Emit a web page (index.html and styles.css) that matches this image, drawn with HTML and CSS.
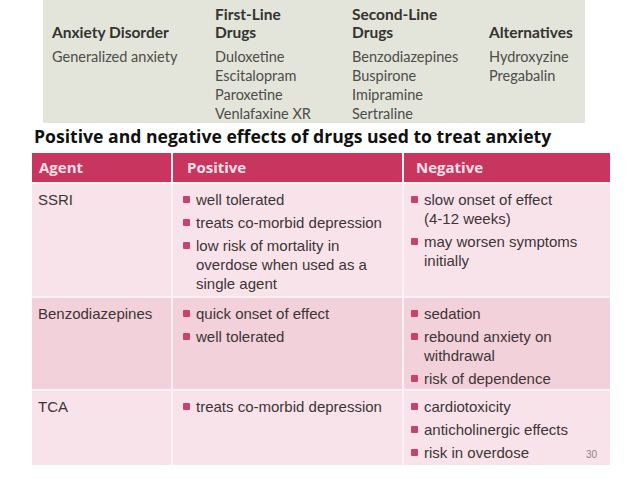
FILE: index.html
```html
<!DOCTYPE html>
<html>
<head>
<meta charset="utf-8">
<link rel="stylesheet" href="styles.css">
</head>
<body>
<div class="panel">
  <div class="ph">Anxiety Disorder</div>
  <div class="ph">First-Line<br>Drugs</div>
  <div class="ph">Second-Line<br>Drugs</div>
  <div class="ph">Alternatives</div>
  <div class="pc">Generalized anxiety</div>
  <div class="pc">Duloxetine<br>Escitalopram<br>Paroxetine<br>Venlafaxine XR</div>
  <div class="pc">Benzodiazepines<br>Buspirone<br>Imipramine<br>Sertraline</div>
  <div class="pc">Hydroxyzine<br>Pregabalin</div>
</div>
<h1 class="title">Positive and negative effects of drugs used to treat anxiety</h1>
<div class="table">
  <div class="th">Agent</div>
  <div class="th">Positive</div>
  <div class="th">Negative</div>

  <div class="td">SSRI</div>
  <div class="td"><ul class="bl">
    <li>well tolerated</li>
    <li>treats co-morbid depression</li>
    <li>low risk of mortality in overdose when used as a single agent</li>
  </ul></div>
  <div class="td neg"><ul class="bl">
    <li>slow onset of effect<br>(4-12 weeks)</li>
    <li>may worsen symptoms initially</li>
  </ul></div>

  <div class="td alt">Benzodiazepines</div>
  <div class="td alt"><ul class="bl">
    <li>quick onset of effect</li>
    <li>well tolerated</li>
  </ul></div>
  <div class="td alt neg"><ul class="bl">
    <li>sedation</li>
    <li>rebound anxiety on withdrawal</li>
    <li>risk of dependence</li>
  </ul></div>

  <div class="td">TCA</div>
  <div class="td"><ul class="bl">
    <li>treats co-morbid depression</li>
  </ul></div>
  <div class="td neg"><ul class="bl">
    <li>cardiotoxicity</li>
    <li>anticholinergic effects</li>
    <li>risk in overdose</li>
  </ul></div>
  <span class="pnum">30</span>
</div>
</body>
</html>
```
FILE: styles.css
```css
html, body {
  margin: 0;
  padding: 0;
  background: #ffffff;
}
body {
  width: 638px;
  height: 479px;
  overflow: hidden;
}
.panel {
  margin-left: 43px;
  width: 542px;
  height: 123px;
  box-sizing: border-box;
  background: #e3e4da;
  padding: 5px 0 0 9px;
  display: grid;
  grid-template-columns: 163px 137px 137px 1fr;
  grid-template-rows: auto auto;
  row-gap: 6px;
  font-family: "Lato", "Open Sans", sans-serif;
  color: #4d4d4a;
}
.ph {
  align-self: end;
  font-weight: 700;
  font-size: 15.5px;
  line-height: 18px;
  color: #333330;
}
.pc {
  font-size: 14.5px;
  line-height: 19px;
}
.title {
  margin: 1px 0 0 34px;
  height: 29px;
  font-family: "Open Sans", sans-serif;
  font-weight: 700;
  font-size: 17.6px;
  line-height: 25px;
  color: #111;
  white-space: nowrap;
}
.table {
  position: relative;
  margin-left: 32px;
  width: 578px;
  display: grid;
  grid-template-columns: 139px 229px 1fr;
  grid-template-rows: 29px 112px 91px 74px;
  gap: 2px;
  background: #fcf1f4;
  font-family: "Liberation Sans", Arial, sans-serif;
  font-size: 15px;
  color: #3c3537;
}
.th {
  background: #c8365f;
  color: #fbe0e8;
  font-family: "Open Sans", sans-serif;
  font-weight: 700;
  font-size: 15px;
  line-height: 29px;
  padding-left: 7px;
}
.th:nth-child(2) { padding-left: 14px; }
.th:nth-child(3) { padding-left: 12px; }
.td {
  background: #f9e3ea;
  padding: 6px 0 0 6px;
  line-height: 19px;
}
.td.alt {
  background: #f2d1db;
}
.bl {
  list-style: none;
  margin: 0;
  padding: 0 6px 0 4px;
  display: flex;
  flex-direction: column;
  gap: 4px;
}
.td.neg .bl {
  padding-left: 1px;
}
.bl li {
  position: relative;
  padding-left: 13px;
}
.bl li::before {
  content: "";
  position: absolute;
  left: 0;
  top: 6px;
  width: 7px;
  height: 7px;
  border-radius: 1px;
  background: #c9426c;
}
.pnum {
  position: absolute;
  right: 13px;
  bottom: 5px;
  font-family: "Liberation Sans", Arial, sans-serif;
  font-size: 10px;
  color: #8a8486;
}
```
